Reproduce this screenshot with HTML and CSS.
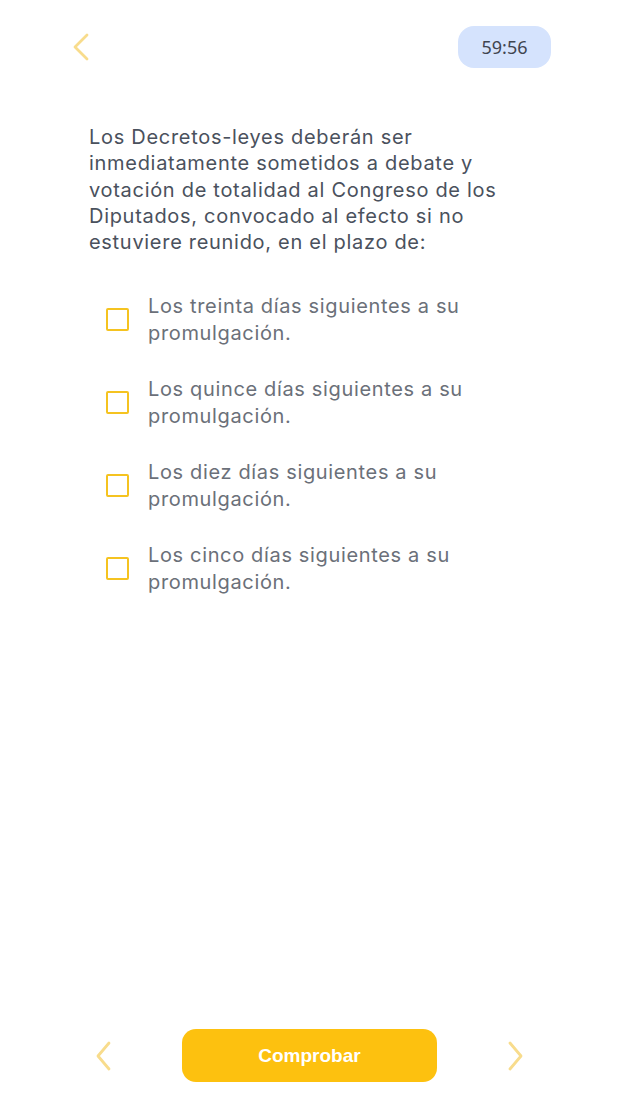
FILE: index.html
```html
<!DOCTYPE html>
<html lang="es">
<head>
<meta charset="utf-8">
<title>Test</title>
<link rel="stylesheet" href="styles.css">
</head>
<body>
<div class="page">
  <header class="topbar">
    <button class="icon-btn back" aria-label="Atrás">
      <svg width="18" height="28" viewBox="0 0 18 28"><path d="M15 2 L3 14 L15 26" fill="none" stroke="#f8dc8c" stroke-width="2.8" stroke-linecap="round" stroke-linejoin="round"/></svg>
    </button>
    <div class="timer">59:56</div>
  </header>

  <main class="content">
    <p class="question">Los Decretos-leyes deberán ser inmediatamente sometidos a debate y votación de totalidad al Congreso de los Diputados, convocado al efecto si no estuviere reunido, en el plazo de:</p>

    <ul class="options">
      <li class="option"><span class="box"></span><span class="opt-text">Los treinta días siguientes a su promulgación.</span></li>
      <li class="option"><span class="box"></span><span class="opt-text">Los quince días siguientes a su promulgación.</span></li>
      <li class="option"><span class="box"></span><span class="opt-text">Los diez días siguientes a su promulgación.</span></li>
      <li class="option"><span class="box"></span><span class="opt-text">Los cinco días siguientes a su promulgación.</span></li>
    </ul>
  </main>

  <footer class="footer">
    <button class="icon-btn nav" aria-label="Anterior">
      <svg width="16" height="30" viewBox="0 0 16 30"><path d="M14 2 L3 15 L14 28" fill="none" stroke="#f8dc8c" stroke-width="2.8" stroke-linecap="round" stroke-linejoin="round"/></svg>
    </button>
    <button class="check">Comprobar</button>
    <button class="icon-btn nav" aria-label="Siguiente">
      <svg width="16" height="30" viewBox="0 0 16 30"><path d="M2 2 L13 15 L2 28" fill="none" stroke="#f8dc8c" stroke-width="2.8" stroke-linecap="round" stroke-linejoin="round"/></svg>
    </button>
  </footer>
</div>
</body>
</html>
```

FILE: styles.css
```css
* { box-sizing: border-box; }
html, body { margin: 0; padding: 0; background: #ffffff; }
body { font-family: Inter, "Noto Sans", sans-serif; }

.page {
  width: 623px;
  min-height: 1106px;
  display: flex;
  flex-direction: column;
}

.topbar {
  display: flex;
  justify-content: space-between;
  align-items: center;
  padding: 26px 72px 0 72px;
}

.icon-btn {
  background: none;
  border: 0;
  padding: 0;
  display: flex;
  align-items: center;
  justify-content: center;
  cursor: pointer;
}

.timer {
  width: 93px;
  height: 42px;
  border-radius: 16px;
  background: #d5e3fd;
  color: #3f4550;
  font-family: "Noto Sans", sans-serif;
  font-size: 18px;
  display: flex;
  align-items: center;
  justify-content: center;
}

.content {
  padding: 56px 0 0 89px;
}

.question {
  margin: 0;
  width: 430px;
  font-size: 20px;
  letter-spacing: 0.7px;
  line-height: 26.3px;
  color: #4a515d;
}

.options {
  list-style: none;
  margin: 38px 0 0 17px;
  padding: 0;
  display: flex;
  flex-direction: column;
  gap: 30px;
}

.option {
  display: flex;
  align-items: center;
  gap: 19px;
}

.box {
  flex: none;
  width: 23px;
  height: 23px;
  border: 2.5px solid #f5c320;
  border-radius: 2px;
}

.opt-text {
  width: 345px;
  font-size: 20px;
  letter-spacing: 0.65px;
  line-height: 26.5px;
  color: #6b7079;
}

.footer {
  margin-top: auto;
  display: flex;
  align-items: center;
  justify-content: space-between;
  padding: 0 99px 24px 95px;
}

.check {
  width: 255px;
  height: 53px;
  border: 0;
  border-radius: 14px;
  background: #fdc10f;
  color: #ffffff;
  font-family: "Liberation Sans", Arial, sans-serif;
  font-weight: bold;
  font-size: 19px;
}
```
